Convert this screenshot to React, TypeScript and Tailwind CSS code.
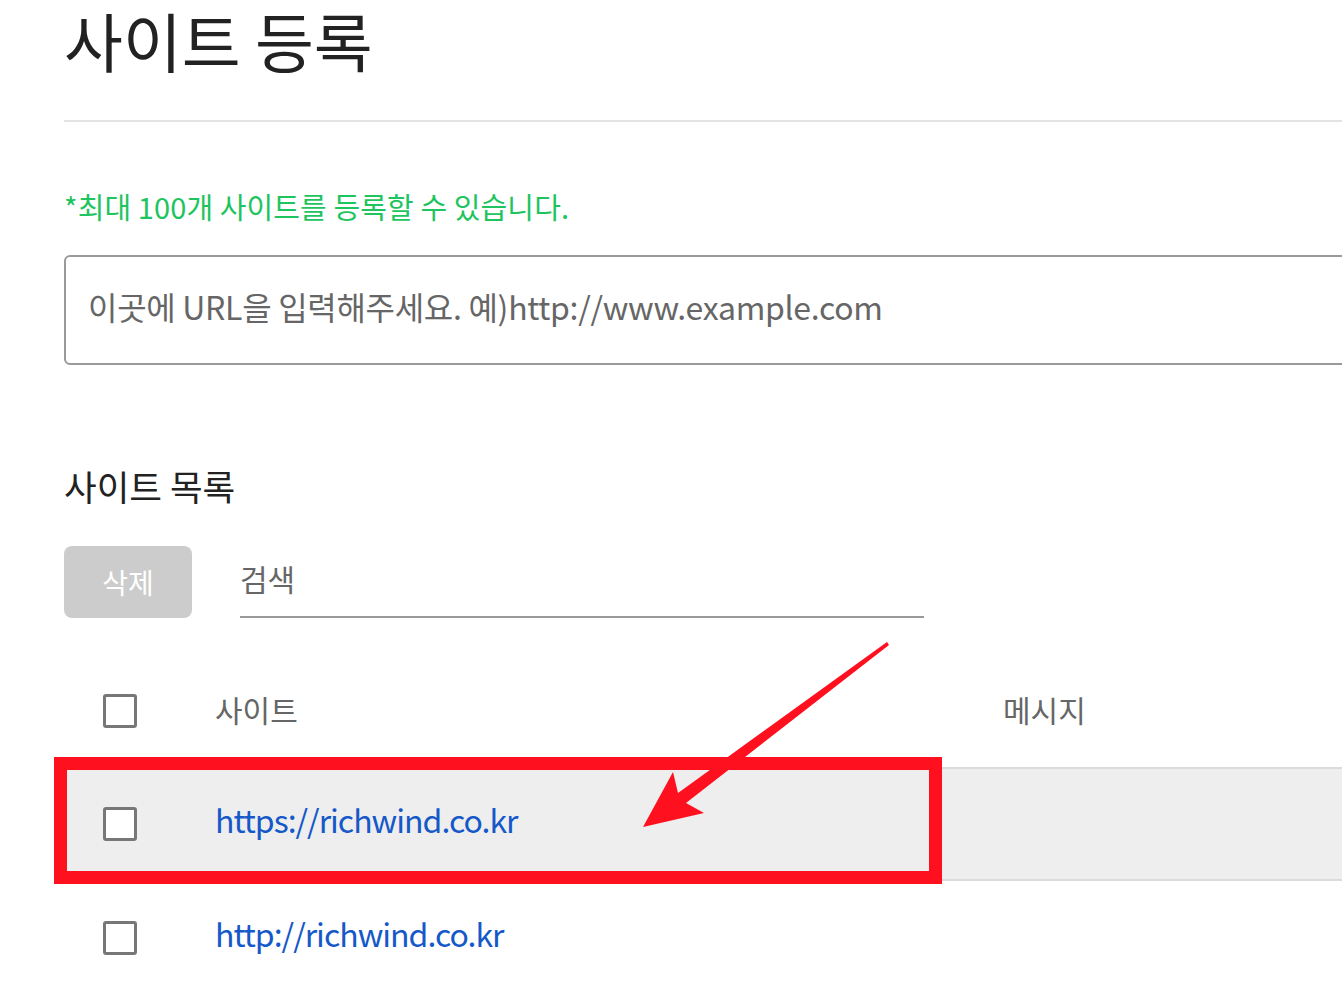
import { useState } from "react";

const sites = [
  { url: "https://richwind.co.kr", message: "" },
  { url: "http://richwind.co.kr", message: "" },
];

function CheckBox() {
  return (
    <div className="ml-[39px] w-[34px] h-[34px] border-[3px] border-[#777] rounded-[3px] bg-white" />
  );
}

export default function App() {
  const [url, setUrl] = useState("");
  const [query, setQuery] = useState("");

  return (
    <div className="relative w-[1342px] h-[986px] overflow-hidden bg-white font-['Noto_Sans_CJK_KR',sans-serif]">
      <div className="pl-16 w-[1500px]">
        <div className="h-[84px] flex items-center pb-[6px]">
          <h1 className="text-[64px] leading-[1.2] text-[#222]">사이트 등록</h1>
        </div>
        <div className="mt-[36px] h-[2px] bg-[#e3e3e3]" />

        <div className="mt-[66px] h-[36px] flex items-center">
          <p className="text-[29px] leading-none text-[#1ec45e] tracking-[0.1px]">
            *최대 100개 사이트를 등록할 수 있습니다.
          </p>
        </div>

        <div className="mt-[31px] h-[110px] border-2 border-[#9a9a9a] rounded-[6px] flex items-center px-[22px] pb-[8px]">
          <input
            value={url}
            onChange={(e) => setUrl(e.target.value)}
            placeholder="이곳에 URL을 입력해주세요. 예)http://www.example.com"
            className="w-full bg-transparent outline-none text-[32px] tracking-[-0.3px] text-[#333] placeholder:text-[#666]"
          />
        </div>

        <div className="mt-[101px] h-[40px] flex items-center">
          <h2 className="text-[35.5px] leading-none text-[#222]">사이트 목록</h2>
        </div>

        <div className="mt-[40px] h-[72px] flex items-end">
          <button className="w-[128px] h-[72px] rounded-[8px] bg-[#cccccc] text-white text-[28px]">
            삭제
          </button>
          <div className="ml-[48px] w-[684px] h-[72px] border-b-2 border-[#999] flex items-center pb-[6px]">
            <input
              value={query}
              onChange={(e) => setQuery(e.target.value)}
              placeholder="검색"
              className="w-full bg-transparent outline-none text-[30px] text-[#333] placeholder:text-[#666]"
            />
          </div>
        </div>

        <div className="mt-[37px]">
          <div className="h-[112px] flex items-center">
            <div className="w-[151px]">
              <CheckBox />
            </div>
            <div className="w-[788px] text-[30px] text-[#666] pb-[4px]">사이트</div>
            <div className="text-[30px] text-[#666] pb-[4px]">메시지</div>
          </div>
          {sites.map((s, i) => (
            <div
              key={s.url}
              className={
                i === 0
                  ? "h-[114px] flex items-center bg-[#eeeeee] border-y-2 border-[#dcdcdc]"
                  : "h-[114px] flex items-center"
              }
            >
              <div className="w-[151px]">
                <CheckBox />
              </div>
              <div className="w-[788px] pb-[10px]">
                <a href="#" className="text-[32px] tracking-[-1px] text-[#1558c8]">
                  {s.url}
                </a>
              </div>
              <div className="text-[30px] text-[#666]">{s.message}</div>
            </div>
          ))}
        </div>
      </div>

      {/* annotation */}
      <div className="absolute left-[54px] top-[757px] w-[888px] h-[127px] border-[13px] border-[#ff101f] pointer-events-none" />
      <svg
        className="absolute inset-0 pointer-events-none"
        width="1342"
        height="986"
        viewBox="0 0 1342 986"
      >
        <polygon
          points="887,642 889,645 686,803 704,813 643,827 673,772 678,793"
          fill="#ff101f"
        />
      </svg>
    </div>
  );
}
